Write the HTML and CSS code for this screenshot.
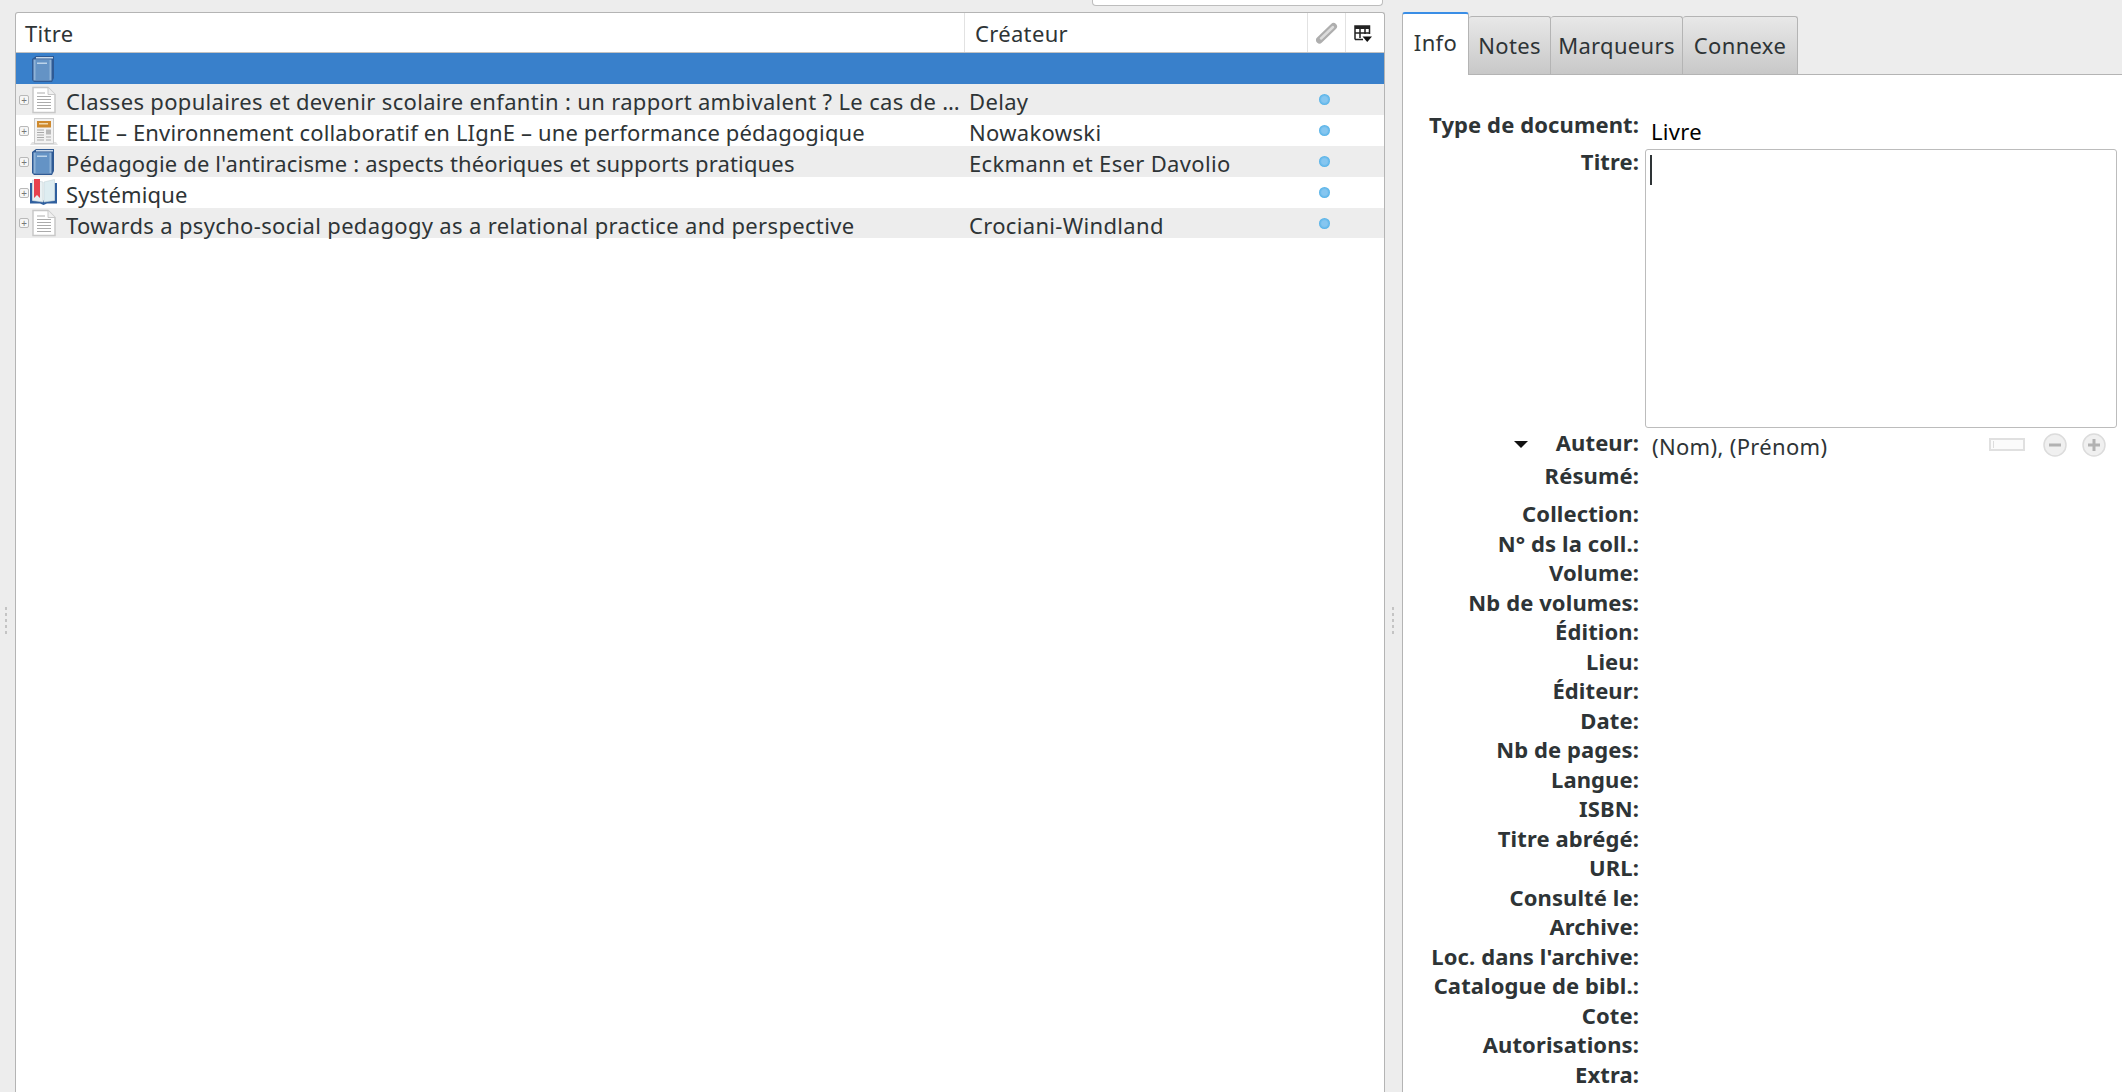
FILE: index.html
```html
<!DOCTYPE html>
<html lang="fr">
<head>
  <meta charset="UTF-8">
  <title>Zotero</title>
  <link rel="stylesheet" href="styles.css">
</head>
<body>

  <svg class="defs" width="0" height="0">
    <symbol id="i-book" viewBox="0 0 28 28">
      <path d="M2 4 L6 1 H24 V23 L22 27 H4 L2 25 Z" fill="#2f5a94"/>
      <path d="M6 2 H23 V3.500 H6 Z" fill="#c9d9ea"/>
      <rect x="3.500" y="4.500" width="18" height="21" fill="#8fb2d6"/>
      <rect x="5.500" y="5" width="14" height="20" fill="#6493c5"/>
      <rect x="7" y="7.500" width="10" height="1.500" fill="#bcd4ea"/>
    </symbol>
    <symbol id="i-doc" viewBox="0 0 28 28">
      <path d="M3 1.500 H18 L25 8.500 V26.500 H3 Z" fill="#fff" stroke="#c8c8c8" stroke-width="1.500"/>
      <path d="M18 1.500 V8.500 H25" fill="#f0f0f0" stroke="#c8c8c8"/>
      <path d="M7 7 H15 M7 10.500 H21 M7 13.500 H21 M7 16.500 H21 M7 19.500 H21 M7 22.500 H21" stroke="#ababab" stroke-width="1.200"/>
    </symbol>
    <symbol id="i-news" viewBox="0 0 28 28">
      <path d="M0 28 H28 L26 25 H2 Z" fill="#e2e2e2"/>
      <rect x="4.500" y="1.500" width="19" height="25" fill="#f2f2f2" stroke="#cbcbcb"/>
      <rect x="7" y="4" width="14" height="6.500" fill="#cf8a2e"/>
      <rect x="9" y="6" width="9" height="1.500" fill="#f0d9b0"/>
      <path d="M7 13 H14 M7 15.500 H14 M7 18 H14 M7 20.500 H14 M7 23 H14" stroke="#a9a9a9" stroke-width="1.200"/>
      <rect x="16" y="12.500" width="5" height="5" fill="#b9b9b9"/>
      <path d="M16 20 H21 M16 23 H21" stroke="#a9a9a9" stroke-width="1.200"/>
    </symbol>
    <symbol id="i-open" viewBox="0 0 28 28">
      <path d="M0 4 V24.500 H10 L13.500 26 L17 24.500 H27 V4 H24.500 V21.500 H2.500 V4 Z" fill="#2f5f9e"/>
      <path d="M2.500 1 L13 3 V23 L2.500 21.500 Z" fill="#e9f1f3" stroke="#c6d3d8" stroke-width=".6"/>
      <path d="M14 3 L24.500 0.500 V21.500 L14 23 Z" fill="#deedf1" stroke="#c6d3d8" stroke-width=".6"/>
      <path d="M4 0 H10 V19 L7 16 L4 19 Z" fill="#e8424e"/>
    </symbol>
  </svg>

  <div class="app">
    <section class="items">
      <div class="search-strip"><div class="search-box"></div></div>
      <div class="tree">
        <div class="tree-head">
          <div class="col-title">Titre</div>
          <div class="col-creator">Créateur</div>
          <div class="col-attach">
            <svg width="22" height="22" viewBox="0 0 22 22">
              <path d="M3.500 18 L17.500 4.500" stroke="#aeaeae" stroke-width="7" stroke-linecap="round"/>
              <path d="M5 16.500 L17 5" stroke="#dcdcdc" stroke-width="2.500" stroke-linecap="round"/>
            </svg>
          </div>
          <div class="col-picker">
            <svg width="20" height="20" viewBox="0 0 20 20">
              <path d="M2 15.500 V2 H16.500 V10 M7 5 V14 M12 5 V10 M2 9 H16.500 M2 15.500 H10" fill="none" stroke="#222" stroke-width="1.500"/>
              <rect x="2" y="2" width="14.500" height="3" fill="#222"/>
              <path d="M9.500 12.500 H19 L14.250 18 Z" fill="#111"/>
            </svg>
          </div>
        </div>

        <div class="row selected">
          <span class="twisty-empty"></span>
          <svg class="item-icon"><use href="#i-book"/></svg>
        </div>
        <div class="row alt">
          <span class="twisty">+</span>
          <svg class="item-icon"><use href="#i-doc"/></svg>
          <span class="cell-title">Classes populaires et devenir scolaire enfantin : un rapport ambivalent ? Le cas de …</span>
          <span class="cell-creator">Delay</span>
          <span class="cell-dot"><i class="dot"></i></span>
        </div>
        <div class="row">
          <span class="twisty">+</span>
          <svg class="item-icon"><use href="#i-news"/></svg>
          <span class="cell-title tight">ELIE – Environnement collaboratif en LIgnE – une performance pédagogique</span>
          <span class="cell-creator">Nowakowski</span>
          <span class="cell-dot"><i class="dot"></i></span>
        </div>
        <div class="row alt">
          <span class="twisty">+</span>
          <svg class="item-icon"><use href="#i-book"/></svg>
          <span class="cell-title tight">Pédagogie de l'antiracisme : aspects théoriques et supports pratiques</span>
          <span class="cell-creator">Eckmann et Eser Davolio</span>
          <span class="cell-dot"><i class="dot"></i></span>
        </div>
        <div class="row">
          <span class="twisty">+</span>
          <svg class="item-icon"><use href="#i-open"/></svg>
          <span class="cell-title tight">Systémique</span>
          <span class="cell-creator"></span>
          <span class="cell-dot"><i class="dot"></i></span>
        </div>
        <div class="row alt">
          <span class="twisty">+</span>
          <svg class="item-icon"><use href="#i-doc"/></svg>
          <span class="cell-title">Towards a psycho-social pedagogy as a relational practice and perspective</span>
          <span class="cell-creator">Crociani-Windland</span>
          <span class="cell-dot"><i class="dot"></i></span>
        </div>
      </div>
      <div class="grip grip-left"><i></i><i></i><i></i><i></i><i></i></div>
    </section>

    <div class="splitter"><div class="grip"><i></i><i></i><i></i><i></i><i></i></div></div>

    <section class="details">
      <div class="tabs">
        <div class="tab active">Info</div>
        <div class="tab tab-notes">Notes</div>
        <div class="tab tab-tags">Marqueurs</div>
        <div class="tab tab-related">Connexe</div>
      </div>
      <div class="panel">
        <div class="field field-type"><label>Type de document:</label><span class="type-value">Livre</span></div>
        <div class="field field-title">
          <label>Titre:</label>
          <div class="title-box"><span class="caret"></span></div>
        </div>
        <div class="field field-author">
          <label><span class="arrow"></span>Auteur:</label>
          <span class="author-value">(Nom), (Prénom)</span>
          <div class="author-btns">
            <span class="mode-switch"><i></i></span>
            <svg class="round-btn" width="24" height="24" viewBox="0 0 24 24">
              <circle cx="12" cy="12" r="11" fill="#f0f0f0" stroke="#dcdcdc" stroke-width="1.500"/>
              <path d="M6 12 H18" stroke="#b2b2b2" stroke-width="3"/>
            </svg>
            <svg class="round-btn" width="24" height="24" viewBox="0 0 24 24">
              <circle cx="12" cy="12" r="11" fill="#f0f0f0" stroke="#dcdcdc" stroke-width="1.500"/>
              <path d="M6 12 H18 M12 6 V18" stroke="#b2b2b2" stroke-width="3"/>
            </svg>
          </div>
        </div>
        <div class="field field-abstract"><label>Résumé:</label></div>
        <div class="field"><label>Collection:</label></div>
        <div class="field"><label>N° ds la coll.:</label></div>
        <div class="field"><label>Volume:</label></div>
        <div class="field"><label>Nb de volumes:</label></div>
        <div class="field"><label>Édition:</label></div>
        <div class="field"><label>Lieu:</label></div>
        <div class="field"><label>Éditeur:</label></div>
        <div class="field"><label>Date:</label></div>
        <div class="field"><label>Nb de pages:</label></div>
        <div class="field"><label>Langue:</label></div>
        <div class="field"><label>ISBN:</label></div>
        <div class="field"><label>Titre abrégé:</label></div>
        <div class="field"><label>URL:</label></div>
        <div class="field"><label>Consulté le:</label></div>
        <div class="field"><label>Archive:</label></div>
        <div class="field"><label>Loc. dans l'archive:</label></div>
        <div class="field"><label>Catalogue de bibl.:</label></div>
        <div class="field"><label>Cote:</label></div>
        <div class="field"><label>Autorisations:</label></div>
        <div class="field"><label>Extra:</label></div>
      </div>
    </section>
  </div>

</body>
</html>
```

FILE: styles.css
```css
html, body {
  margin: 0;
  height: 100%;
  overflow: hidden;
}

body {
  font-family: "Noto Sans", sans-serif;
  font-size: 22px;
  letter-spacing: 0.33px;
  background-color: #ededed;
  color: #2e3436;
}

.defs {
  position: absolute;
}

.app {
  display: flex;
  height: 1092px;
  overflow: hidden;
}

/* left side */
.items {
  position: relative;
  width: 1385px;
  padding-left: 15px;
  box-sizing: border-box;
  display: flex;
  flex-direction: column;
  flex: none;
}

.search-strip {
  height: 12px;
  display: flex;
  justify-content: flex-end;
  padding-right: 2px;
  flex: none;
}

.search-box {
  width: 289px;
  height: 5px;
  background: #fff;
  border: 1px solid #bdbdbd;
  border-top: none;
  border-radius: 0 0 4px 4px;
}

.tree {
  flex: 1;
  background: #fff;
  border: 1px solid #b4b4b4;
  border-bottom: none;
  border-radius: 3px 3px 0 0;
}

.tree-head {
  display: flex;
  height: 39px;
  border-bottom: 1px solid #c2c2c2;
  align-items: stretch;
}

.col-title {
  width: 948px;
  padding-left: 9px;
  line-height: 41px;
  flex: none;
  box-sizing: border-box;
}

.col-creator {
  flex: 1;
  padding-left: 10px;
  line-height: 41px;
  border-left: 1px solid #e2e2e2;
}

.col-attach, .col-picker {
  flex: none;
  display: flex;
  align-items: center;
  justify-content: center;
  border-left: 1px solid #e2e2e2;
}

.col-attach {
  width: 37px;
}

.col-picker {
  width: 39px;
  padding: 2px 4px 0 0;
  box-sizing: border-box;
}

.row {
  display: flex;
  align-items: center;
  height: 31px;
}

.row.selected {
  background-color: #3980cb;
}

.row.alt {
  background-color: #ededed;
}

.row:last-child {
  height: 30px;
}

.twisty, .twisty-empty {
  width: 10px;
  height: 10px;
  margin-left: 3px;
  margin-right: 1px;
  box-sizing: border-box;
  flex: none;
}

.twisty {
  border: 1px solid #b9b9b9;
  border-radius: 2px;
  background: #f6f6f6;
  color: #777;
  font-size: 10px;
  letter-spacing: 0;
  line-height: 8px;
  text-align: center;
}

.item-icon {
  width: 28px;
  height: 28px;
  flex: none;
}

.cell-title {
  width: 903px;
  padding-left: 8px;
  padding-top: 3px;
  flex: none;
  white-space: nowrap;
  overflow: hidden;
}

.cell-title.tight {
  letter-spacing: 0.15px;
}

.cell-creator {
  width: 340px;
  padding-top: 3px;
  flex: none;
  white-space: nowrap;
}

.cell-dot {
  width: 30px;
  flex: none;
  display: flex;
  justify-content: center;
}

.dot {
  width: 11px;
  height: 11px;
  border-radius: 50%;
  background: radial-gradient(circle, #86c6f0 35%, #3fa9e4 85%);
}

.splitter {
  width: 17px;
  flex: none;
  position: relative;
}

.grip {
  position: absolute;
  top: 607px;
  left: 7px;
  display: flex;
  flex-direction: column;
  gap: 3px;
}

.grip-left {
  left: 5px;
}

.grip i {
  width: 2px;
  height: 3px;
  background: #c4c4c4;
}

/* right side */
.details {
  flex: 1;
  padding-top: 12px;
  display: flex;
  flex-direction: column;
  min-width: 0;
}

.tabs {
  display: flex;
  align-items: flex-end;
  height: 62px;
  flex: none;
}

.tab {
  height: 58px;
  line-height: 56px;
  box-sizing: border-box;
  text-align: center;
  border: 1px solid #b4b4b4;
  border-bottom: none;
  border-left: none;
  border-radius: 3px 3px 0 0;
  background: linear-gradient(#e8e8e8, #c8c8c8);
}

.tab.active {
  width: 67px;
  height: 63px;
  margin-bottom: -1px;
  line-height: 57px;
  background: #fff;
  border-left: 1px solid #b4b4b4;
  border-top: 2px solid #3a8ee6;
  position: relative;
  z-index: 1;
}

.tab-notes {
  width: 82px;
}

.tab-tags {
  width: 132px;
}

.tab-related {
  width: 115px;
}

.panel {
  flex: 1;
  background: #fff;
  border-top: 1px solid #b4b4b4;
  border-left: 1px solid #b4b4b4;
  padding-top: 35px;
  display: flex;
  flex-direction: column;
}

.field {
  display: flex;
  height: 29.500px;
  line-height: 29.500px;
  flex: none;
}

.field label {
  width: 236px;
  flex: none;
  text-align: right;
  font-weight: 700;
  letter-spacing: 0.1px;
  line-height: 28.500px;
  white-space: nowrap;
}

.field-type {
  height: 37px;
}

.type-value {
  margin-left: 12px;
  margin-top: 7px;
  color: #000;
}

.field-title {
  height: 281px;
}

.title-box {
  margin-left: 6px;
  margin-top: 2px;
  width: 472px;
  height: 279px;
  background: #fff;
  border: 1px solid #bcbcbc;
  border-radius: 3px;
  box-sizing: border-box;
  padding: 5px 4px;
}

.caret {
  display: block;
  width: 2px;
  height: 30px;
  background: #2e3436;
}

.field-author {
  height: 33px;
  line-height: 33px;
}

.arrow {
  display: inline-block;
  width: 0;
  height: 0;
  border-left: 7px solid transparent;
  border-right: 7px solid transparent;
  border-top: 7px solid #111;
  margin-right: 28px;
  vertical-align: 3px;
}

.author-value {
  margin-left: 13px;
  margin-top: 2px;
}

.author-btns {
  margin-left: auto;
  padding-right: 16px;
  display: flex;
  align-items: center;
  height: 33px;
  gap: 15px;
}

.mode-switch {
  width: 36px;
  height: 13px;
  box-sizing: border-box;
  border: 2px solid #e0e0e0;
  background: #fbfbfb;
  padding-left: 2px;
  display: flex;
  align-items: center;
  margin-right: 3px;
}

.mode-switch i {
  width: 1px;
  height: 7px;
  background: #ddd;
}

.field-abstract {
  height: 38px;
}
```
